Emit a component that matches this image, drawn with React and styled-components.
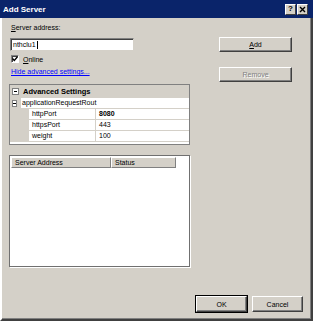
import React from 'react';
import styled, { createGlobalStyle } from 'styled-components';

const GlobalStyle = createGlobalStyle`
  html, body {
    margin: 0;
    padding: 0;
    background: #d4d0c8;
  }
  body {
    font-family: "Liberation Sans", Arial, sans-serif;
    font-size: 7px;
    color: #000;
  }
`;

const Window = styled.div`
  width: 313px;
  height: 321px;
  box-sizing: border-box;
  display: flex;
  flex-direction: column;
  background: #d4d0c8;
`;

const TitleBar = styled.div`
  height: 18px;
  flex: none;
  background: #0a246a;
  display: flex;
  align-items: center;
  padding: 0 5px 0 3px;
  box-sizing: border-box;
`;

const Title = styled.div`
  flex: 1;
  color: #fff;
  font-weight: bold;
  font-size: 8px;
`;

const CaptionButton = styled.div`
  width: 9px;
  height: 9px;
  margin-left: ${p => (p.$gap ? '1px' : '0')};
  background: #d4d0c8;
  border-top: 1px solid #fff;
  border-left: 1px solid #fff;
  border-right: 1px solid #404040;
  border-bottom: 1px solid #404040;
  display: flex;
  align-items: center;
  justify-content: center;
  font-size: 8px;
  font-weight: bold;
  line-height: 1;
  color: #000;
`;

const Frame = styled.div`
  flex: 1;
  display: flex;
  flex-direction: column;
  border-left: 2px solid #fff;
  border-right: 2px solid #404040;
  border-bottom: 2px solid #404040;
  box-shadow: inset -1px -1px #808080;
  padding: 5px 8px 7px 7px;
`;

const Main = styled.div`
  display: flex;
  gap: 29px;
`;

const LeftColumn = styled.div`
  width: 181px;
  display: flex;
  flex-direction: column;
`;

const RightColumn = styled.div`
  width: 73px;
  display: flex;
  flex-direction: column;
  padding-top: 14px;
  gap: 15px;
`;

const Label = styled.div`
  height: 10px;
  line-height: 10px;
  margin-left: 2px;
`;

const Key = styled.span`
  text-decoration: underline;
`;

const TextBox = styled.div`
  margin-top: 5px;
  margin-left: 1px;
  width: 124px;
  height: 13px;
  box-sizing: border-box;
  background: #fff;
  border-top: 1px solid #808080;
  border-left: 1px solid #808080;
  border-right: 1px solid #d4d0c8;
  border-bottom: 1px solid #d4d0c8;
  box-shadow: inset 1px 1px #404040;
  display: flex;
  align-items: center;
  padding-left: 2px;
  font-size: 7px;
`;

const Caret = styled.span`
  display: inline-block;
  width: 1px;
  height: 8px;
  background: #000;
  margin-left: 1px;
`;

const CheckRow = styled.div`
  margin-top: 3px;
  margin-left: 2px;
  height: 10px;
  display: flex;
  align-items: center;
  gap: 4px;
`;

const CheckBox = styled.div`
  width: 8px;
  height: 8px;
  box-sizing: border-box;
  background: #fff;
  border-top: 1px solid #808080;
  border-left: 1px solid #808080;
  border-right: 1px solid #fff;
  border-bottom: 1px solid #fff;
  box-shadow: inset 1px 1px #404040;
  display: flex;
  align-items: center;
  justify-content: center;
`;

const Link = styled.a`
  margin-top: 3px;
  margin-left: 2px;
  height: 9px;
  line-height: 9px;
  color: #0000ff;
  text-decoration: underline;
  cursor: pointer;
`;

const PropGrid = styled.div`
  margin-top: 8px;
  height: 61px;
  box-sizing: border-box;
  border: 1px solid #808080;
  background: #fff;
  overflow: hidden;
`;

const CategoryRow = styled.div`
  height: 12px;
  background: #d4d0c8;
  display: flex;
  align-items: center;
  border-bottom: 1px solid #d4d0c8;
  font-weight: bold;
  font-size: 7.5px;
`;

const PropRow = styled.div`
  height: 10px;
  display: flex;
  border-bottom: 1px solid #d4d0c8;
`;

const Margin = styled.div`
  width: ${p => p.$w}px;
  flex: none;
  background: #d4d0c8;
  display: flex;
  align-items: center;
`;

const NameCell = styled.div`
  width: ${p => p.$w}px;
  flex: none;
  padding-left: ${p => (p.$open ? 1 : 3)}px;
  box-sizing: border-box;
  border-right: 1px solid ${p => (p.$open ? 'transparent' : '#d4d0c8')};
  white-space: nowrap;
  overflow: ${p => (p.$open ? 'visible' : 'hidden')};
  line-height: 10px;
`;

const ValueCell = styled.div`
  flex: 1;
  padding-left: 3px;
  line-height: 10px;
  font-weight: ${p => (p.$bold ? 'bold' : 'normal')};
`;

const ExpandBox = styled.div`
  width: 7px;
  height: 7px;
  box-sizing: border-box;
  border: 1px solid #808080;
  background: #fff;
  margin-left: 2px;
  margin-right: 4px;
  display: flex;
  align-items: center;
  justify-content: center;
  &::after {
    content: '';
    width: 3px;
    height: 1px;
    background: #000;
  }
`;

const ListView = styled.div`
  margin-top: 10px;
  height: 112px;
  box-sizing: border-box;
  background: #fff;
  border: 1px solid #707070;
  box-shadow: 1px 1px #fff;
  padding: 1px;
`;

const HeaderRow = styled.div`
  display: flex;
  height: 11px;
`;

const HeaderCell = styled.div`
  width: ${p => p.$w}px;
  box-sizing: border-box;
  background: #d4d0c8;
  border-top: 1px solid #fff;
  border-left: 1px solid #fff;
  border-right: 1px solid #808080;
  border-bottom: 1px solid #808080;
  padding-left: 3px;
  line-height: 9px;
`;

const Button = styled.div`
  height: ${p => p.$h || 15}px;
  width: ${p => p.$w || 73}px;
  box-sizing: border-box;
  background: #d4d0c8;
  border-top: 1px solid #fff;
  border-left: 1px solid #fff;
  border-right: 1px solid #404040;
  border-bottom: 1px solid #404040;
  box-shadow: inset -1px -1px #808080;
  outline: ${p => (p.$default ? '1px solid #000' : 'none')};
  display: flex;
  align-items: center;
  justify-content: center;
  color: ${p => (p.$disabled ? '#808080' : '#000')};
  text-shadow: ${p => (p.$disabled ? '1px 1px #fff' : 'none')};
`;

const Footer = styled.div`
  margin-top: auto;
  display: flex;
  justify-content: flex-end;
  gap: 5px;
`;

const props = [
  { name: 'httpPort', value: '8080', bold: true },
  { name: 'httpsPort', value: '443' },
  { name: 'weight', value: '100' },
];

export default function App() {
  return (
    <>
      <GlobalStyle />
      <Window>
        <TitleBar>
          <Title>Add Server</Title>
          <CaptionButton>?</CaptionButton>
          <CaptionButton $gap>
            <svg width="7" height="7" viewBox="0 0 7 7">
              <path d="M1 1 L6 6 M6 1 L1 6" stroke="#000" strokeWidth="1.4" />
            </svg>
          </CaptionButton>
        </TitleBar>
        <Frame>
          <Main>
            <LeftColumn>
              <Label><Key>S</Key>erver address:</Label>
              <TextBox>nthclu1<Caret /></TextBox>
              <CheckRow>
                <CheckBox>
                  <svg width="6" height="6" viewBox="0 0 6 6">
                    <path d="M0.5 2.5 L2.3 4.5 L5.5 0.8" stroke="#000" strokeWidth="1.3" fill="none" />
                  </svg>
                </CheckBox>
                <span><Key>O</Key>nline</span>
              </CheckRow>
              <Link>Hide advanced settings...</Link>
              <PropGrid>
                <CategoryRow>
                  <ExpandBox />
                  Advanced Settings
                </CategoryRow>
                <PropRow>
                  <Margin $w={11}><ExpandBox /></Margin>
                  <NameCell $w={75} $open>applicationRequestRout</NameCell>
                  <ValueCell />
                </PropRow>
                {props.map(p => (
                  <PropRow key={p.name}>
                    <Margin $w={19} />
                    <NameCell $w={67}>{p.name}</NameCell>
                    <ValueCell $bold={p.bold}>{p.value}</ValueCell>
                  </PropRow>
                ))}
              </PropGrid>
              <ListView>
                <HeaderRow>
                  <HeaderCell $w={100}>Server Address</HeaderCell>
                  <HeaderCell $w={65}>Status</HeaderCell>
                </HeaderRow>
              </ListView>
            </LeftColumn>
            <RightColumn>
              <Button><span><Key>A</Key>dd</span></Button>
              <Button $disabled>Remove</Button>
            </RightColumn>
          </Main>
          <Footer>
            <Button $w={51} $h={16} $default>OK</Button>
            <Button $w={51} $h={16}>Cancel</Button>
          </Footer>
        </Frame>
      </Window>
    </>
  );
}
